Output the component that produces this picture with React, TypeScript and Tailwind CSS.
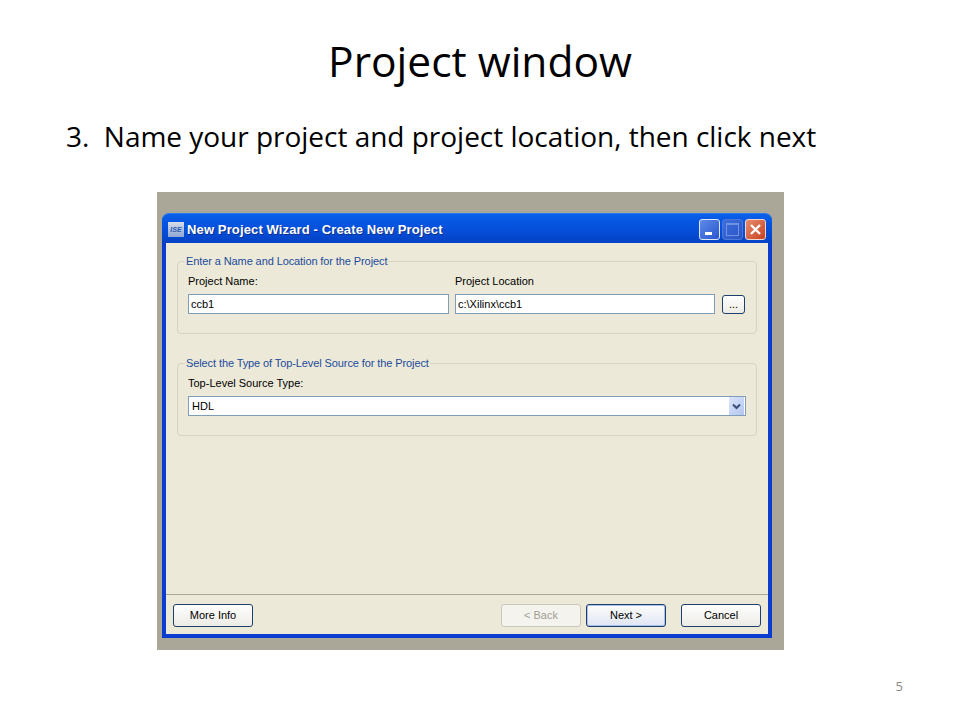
const uiFont = "font-['Liberation_Sans',Arial,sans-serif]";

function XpButton({ label, disabled, primary }: { label: string; disabled?: boolean; primary?: boolean }) {
  return (
    <div
      className={`w-[80px] h-[23px] rounded-[3px] flex items-center justify-center text-[11px] border ${
        disabled
          ? "border-[#c9c7ba] bg-[#f4f3ee] text-[#a19f92]"
          : primary
            ? "border-[#1c3f6e] bg-gradient-to-b from-[#fdfdfb] to-[#dfe5f3] text-black shadow-[inset_0_0_0_1px_#a9c0e8]"
            : "border-[#1c3f6e] bg-gradient-to-b from-white to-[#ecebe5] text-black"
      }`}
    >
      {label}
    </div>
  );
}

function GroupBox({ title, children }: { title: string; children: React.ReactNode }) {
  return (
    <fieldset className="border border-[#d6d3c2] rounded-[4px] px-[10px] pt-[8px] pb-[19px]">
      <legend className="ml-[-3px] px-[1px] h-[12px] leading-[12px] text-[11px] tracking-[-0.1px] text-[#1c4b9c]">{title}</legend>
      {children}
    </fieldset>
  );
}

function TextBox({ value, className }: { value: string; className: string }) {
  return (
    <div className={`h-[20px] border border-[#7f9db9] bg-white px-[2px] flex items-center text-[11px] text-black ${className}`}>
      {value}
    </div>
  );
}

function CaptionButton({ kind }: { kind: "min" | "max" | "close" }) {
  if (kind === "close") {
    return (
      <div className="w-[21px] h-[21px] rounded-[3px] border border-[#f0d8d0] bg-gradient-to-br from-[#e58a6c] to-[#c8401c] flex items-center justify-center">
        <svg width="13" height="13" viewBox="0 0 13 13">
          <path d="M2 2 L11 11 M11 2 L2 11" stroke="#fff" strokeWidth="2.4" />
        </svg>
      </div>
    );
  }
  if (kind === "max") {
    return (
      <div className="w-[21px] h-[21px] rounded-[3px] border border-[#4a76d8] bg-gradient-to-br from-[#3e6fdc] to-[#2a55c4] flex items-center justify-center">
        <div className="w-[13px] h-[13px] border border-[#6f93e2] border-t-2" />
      </div>
    );
  }
  return (
    <div className="w-[21px] h-[21px] rounded-[3px] border border-[#dfe8fb] bg-gradient-to-br from-[#5f8bea] to-[#2a55cc] flex items-end pl-[5px] pb-[4px]">
      <div className="w-[7px] h-[3px] bg-white" />
    </div>
  );
}

export default function App() {
  return (
    <div className="w-[960px] h-[720px] bg-white flex flex-col font-['Open_Sans',sans-serif] overflow-hidden">
      <div className="pt-[33px] h-[90px] text-center text-[42.5px] leading-[56px] text-black">Project window</div>
      <div className="ml-[66px] mt-[27px] h-[38px] leading-[38px] text-[28px] tracking-[-0.02px] text-black whitespace-pre">3.  Name your project and project location, then click next</div>
      <div className="ml-[157px] mt-[37px] w-[627px] h-[458px] bg-[#aaa799] pl-[5px] pt-[21px]">
        <div className={`w-[610px] h-[425px] flex flex-col rounded-t-[7px] ${uiFont}`}>
          <div className="h-[30px] rounded-t-[7px] bg-gradient-to-b from-[#0a5fe8] via-[#0550dc] to-[#0342c4] border-t border-[#2a78f0] flex items-center pt-[2px] pl-[6px] pr-[6px]">
            <div className="w-[16px] h-[15px] bg-gradient-to-b from-[#d8dde8] to-[#8fa6d4] flex items-center justify-center text-[7px] font-bold italic leading-none text-[#2a5ab0]">ISE</div>
            <div className="ml-[3px] text-[13px] font-bold text-white tracking-[0.13px] [text-shadow:1px_1px_0_#0f2f8c]">New Project Wizard - Create New Project</div>
            <div className="ml-auto flex gap-[2px]">
              <CaptionButton kind="min" />
              <CaptionButton kind="max" />
              <CaptionButton kind="close" />
            </div>
          </div>
          <div className="flex-1 flex flex-col bg-[#ece9d8] border-x-4 border-b-4 border-[#0a3cd0]">
            <div className="flex-1 px-[11px] pt-[12px] flex flex-col gap-[23px]">
              <GroupBox title="Enter a Name and Location for the Project">
                <div className="flex text-[11px] leading-[12px] text-black">
                  <div className="w-[261px]">Project Name:</div>
                  <div className="ml-[6px]">Project Location</div>
                </div>
                <div className="mt-[7px] flex items-center">
                  <TextBox value="ccb1" className="w-[261px]" />
                  <TextBox value="c:\Xilinx\ccb1" className="w-[260px] ml-[6px]" />
                  <div className="ml-[7px] w-[23px] h-[19px] rounded-[3px] border border-[#1c3f6e] bg-gradient-to-b from-white to-[#ecebe5] flex items-center justify-center text-[11px] leading-none text-black">...</div>
                </div>
              </GroupBox>
              <GroupBox title="Select the Type of Top-Level Source for the Project">
                <div className="text-[11px] leading-[12px] text-black">Top-Level Source Type:</div>
                <div className="mt-[7px] h-[20px] border border-[#7f9db9] bg-white flex items-center pl-[3px] pr-[1px] text-[11px] text-black">
                  HDL
                  <div className="ml-auto w-[15px] h-[18px] bg-gradient-to-br from-[#dbe5fa] to-[#b3c6f0] flex items-center justify-center">
                    <svg width="9" height="7" viewBox="0 0 9 7">
                      <path d="M1 1.5 L4.5 5 L8 1.5" fill="none" stroke="#3a4d74" strokeWidth="2" />
                    </svg>
                  </div>
                </div>
              </GroupBox>
            </div>
            <div className="h-[40px] border-t border-[#aca899] pl-[7px] pr-[7px] pt-[9px] flex">
              <XpButton label="More Info" />
              <div className="ml-auto flex">
                <XpButton label="< Back" disabled />
                <div className="ml-[5px]">
                  <XpButton label="Next >" primary />
                </div>
                <div className="ml-[15px]">
                  <XpButton label="Cancel" />
                </div>
              </div>
            </div>
          </div>
        </div>
      </div>
      <div className="mt-[27px] pr-[57px] text-right text-[13px] leading-[18px] text-[#898989]">5</div>
    </div>
  );
}
